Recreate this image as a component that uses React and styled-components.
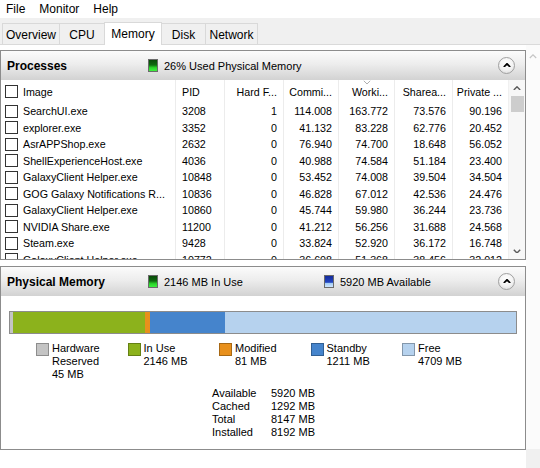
import React from 'react'
import styled, { createGlobalStyle } from 'styled-components'

const menus = ['File', 'Monitor', 'Help']
const tabs = [
  { name: 'Overview', w: 58 },
  { name: 'CPU', w: 46 },
  { name: 'Memory', w: 58, active: true },
  { name: 'Disk', w: 45 },
  { name: 'Network', w: 53 },
]

const columns = [
  { name: 'Image', align: 'left' },
  { name: 'PID', align: 'left' },
  { name: 'Hard F...', align: 'right' },
  { name: 'Commi...', align: 'right' },
  { name: 'Worki...', align: 'right', sorted: true },
  { name: 'Sharea...', align: 'right' },
  { name: 'Private ...', align: 'right' },
]

const processes = [
  ['SearchUI.exe', '3208', '1', '114.008', '163.772', '73.576', '90.196'],
  ['explorer.exe', '3352', '0', '41.132', '83.228', '62.776', '20.452'],
  ['AsrAPPShop.exe', '2632', '0', '76.940', '74.700', '18.648', '56.052'],
  ['ShellExperienceHost.exe', '4036', '0', '40.988', '74.584', '51.184', '23.400'],
  ['GalaxyClient Helper.exe', '10848', '0', '53.452', '74.008', '39.504', '34.504'],
  ['GOG Galaxy Notifications R...', '10836', '0', '46.828', '67.012', '42.536', '24.476'],
  ['GalaxyClient Helper.exe', '10860', '0', '45.744', '59.980', '36.244', '23.736'],
  ['NVIDIA Share.exe', '11200', '0', '41.212', '56.256', '31.688', '24.568'],
  ['Steam.exe', '9428', '0', '33.824', '52.920', '36.172', '16.748'],
  ['GalaxyClient Helper.exe', '10772', '0', '36.608', '51.368', '38.456', '32.012'],
]

const memory = [
  { label: ['Hardware', 'Reserved'], mb: 45, color: '#c4c4c4' },
  { label: ['In Use'], mb: 2146, color: '#8cb21c' },
  { label: ['Modified'], mb: 81, color: '#e8901c' },
  { label: ['Standby'], mb: 1211, color: '#4584cc' },
  { label: ['Free'], mb: 4709, color: '#b6d2ee' },
]

const stats = [
  ['Available', '5920 MB'],
  ['Cached', '1292 MB'],
  ['Total', '8147 MB'],
  ['Installed', '8192 MB'],
]

const Chevron = ({ up = true, color = '#000', size = 8, width = 1.6 }) => (
  <svg width={size} height={size * 0.6} viewBox="0 0 10 6">
    <polyline
      points={up ? '1,5 5,1 9,5' : '1,1 5,5 9,1'}
      fill="none"
      stroke={color}
      strokeWidth={width}
    />
  </svg>
)

const App = () => {
  return (
    <Window>
      <GlobalStyle />
      <MenuBar>
        {menus.map((m) => (
          <MenuItem key={m}>{m}</MenuItem>
        ))}
      </MenuBar>
      <TabStrip>
        {tabs.map((t) => (
          <Tab key={t.name} $w={t.w} $active={t.active}>
            {t.name}
          </Tab>
        ))}
      </TabStrip>
      <Body>
        <Main>
          <Panel $h={210}>
            <PanelHeader>
              <Title>Processes</Title>
              <Status>
                <Indicator $kind="green" />
                26% Used Physical Memory
              </Status>
              <CollapseButton>
                <Chevron width={2.2} />
              </CollapseButton>
            </PanelHeader>
            <TableArea>
              <Table>
                <HeaderRow>
                  {columns.map((c, i) => (
                    <Cell key={c.name} $align={c.align} $first={i === 0} $last={i === columns.length - 1}>
                      {i === 0 && <Checkbox />}
                      {c.name}
                      {c.sorted && (
                        <SortMark>
                          <Chevron up={false} color="#9a9a9a" size={8} width={1} />
                        </SortMark>
                      )}
                    </Cell>
                  ))}
                </HeaderRow>
                {processes.map((row, r) => (
                  <Row key={r}>
                    {row.map((v, i) => (
                      <Cell
                        key={i}
                        $align={columns[i].align}
                        $first={i === 0}
                        $last={i === row.length - 1}
                      >
                        {i === 0 && <Checkbox />}
                        {v}
                      </Cell>
                    ))}
                  </Row>
                ))}
              </Table>
              <ScrollBar>
                <ArrowBox>
                  <Chevron color="#5a5a5a" width={1.8} />
                </ArrowBox>
                <Thumb />
                <Spacer />
                <ArrowBox>
                  <Chevron up={false} color="#5a5a5a" width={1.8} />
                </ArrowBox>
              </ScrollBar>
            </TableArea>
          </Panel>

          <Panel $h={184}>
            <PanelHeader>
              <Title>Physical Memory</Title>
              <Status $w={176}>
                <Indicator $kind="green" />
                2146 MB In Use
              </Status>
              <Status>
                <Indicator $kind="blue" />
                5920 MB Available
              </Status>
              <CollapseButton>
                <Chevron width={2.2} />
              </CollapseButton>
            </PanelHeader>
            <MemoryBody>
              <Bar>
                {memory.map((m) => (
                  <Segment key={m.color} $grow={m.mb} $color={m.color} />
                ))}
              </Bar>
              <Legend>
                {memory.map((m) => (
                  <LegendItem key={m.color}>
                    <Swatch $color={m.color} />
                    <LegendText>
                      {m.label.map((l) => (
                        <div key={l}>{l}</div>
                      ))}
                      <div>{m.mb} MB</div>
                    </LegendText>
                  </LegendItem>
                ))}
              </Legend>
              <Stats>
                {stats.map(([k, v]) => (
                  <React.Fragment key={k}>
                    <span>{k}</span>
                    <span>{v}</span>
                  </React.Fragment>
                ))}
              </Stats>
            </MemoryBody>
          </Panel>
        </Main>
        <OuterScroll>
          <OuterTrack>
            <Chevron color="#c4c4c4" width={1.4} />
          </OuterTrack>
          <Corner />
        </OuterScroll>
      </Body>
    </Window>
  )
}

const GlobalStyle = createGlobalStyle`
  html, body { margin: 0; padding: 0; background: #fff; }
  body {
    font-family: "Liberation Sans", Arial, sans-serif;
    color: #000;
    overflow: hidden;
  }
`

const Window = styled.div`
  width: 540px;
  height: 468px;
  display: flex;
  flex-direction: column;
  overflow: hidden;
  background: #fff;
`

const MenuBar = styled.div`
  height: 18px;
  display: flex;
  align-items: center;
  margin-left: -1px;
  background: #fff;
`

const MenuItem = styled.span`
  padding: 0 7px;
  font-size: 12px;
  line-height: 18px;
`

const TabStrip = styled.div`
  height: 26px;
  display: flex;
  align-items: flex-end;
  padding-left: 2px;
  background: #f0f0f0;
`

const Tab = styled.div`
  box-sizing: border-box;
  width: ${(p) => p.$w}px;
  height: ${(p) => (p.$active ? 23 : 21)}px;
  margin-bottom: ${(p) => (p.$active ? -1 : 0)}px;
  margin-right: -1px;
  position: relative;
  z-index: ${(p) => (p.$active ? 1 : 0)};
  display: flex;
  align-items: center;
  justify-content: center;
  padding-top: ${(p) => (p.$active ? 0 : 1)}px;
  font-size: 12px;
  background: ${(p) => (p.$active ? '#fff' : '#f0f0f0')};
  border: 1px solid #d9d9d9;
  border-bottom: none;
`

const Body = styled.div`
  flex: 1;
  display: flex;
  min-height: 0;
  border-top: 1px solid #dadada;
`

const Main = styled.div`
  width: 526px;
  padding-top: 5px;
  display: flex;
  flex-direction: column;
  gap: 6px;
`

const Panel = styled.div`
  box-sizing: border-box;
  height: ${(p) => p.$h}px;
  border: 1px solid #8c8c8c;
  display: flex;
  flex-direction: column;
  overflow: hidden;
  background: #fff;
`

const PanelHeader = styled.div`
  height: 29px;
  flex-shrink: 0;
  display: flex;
  align-items: center;
  padding: 0 10px 0 6px;
  background: linear-gradient(to bottom, #fbfbfb 0%, #ededed 45%, #d2d2d2 100%);
`

const Title = styled.div`
  width: 141px;
  font-size: 12px;
  font-weight: bold;
`

const Status = styled.div`
  display: flex;
  align-items: center;
  gap: 6px;
  font-size: 11px;
  ${(p) => p.$w && `width: ${p.$w}px;`}
`

const Indicator = styled.span`
  box-sizing: border-box;
  width: 10px;
  height: 13px;
  border: 1px solid #6a6a6a;
  background: ${(p) =>
    p.$kind === 'green'
      ? 'linear-gradient(to bottom, #0a4a0a 0%, #0f6a10 45%, #2ad52a 70%, #3ef03e 100%)'
      : 'linear-gradient(to bottom, #132a9a 0%, #2346c2 58%, #9fcaf4 64%, #cfe6ff 100%)'};
`

const CollapseButton = styled.div`
  margin-left: auto;
  box-sizing: border-box;
  width: 17px;
  height: 17px;
  border-radius: 50%;
  border: 1px solid #a0a0a0;
  background: radial-gradient(circle at 50% 35%, #ffffff 0%, #f2f2f2 55%, #d4d4d4 100%);
  display: flex;
  align-items: center;
  justify-content: center;
  padding-bottom: 1px;
`

const TableArea = styled.div`
  flex: 1;
  min-height: 0;
  display: flex;
  overflow: hidden;
`

const Table = styled.div`
  width: 507px;
  display: flex;
  flex-direction: column;
`

const gridCols = '175px 49px 59px 55px 56px 58px 55px'

const HeaderRow = styled.div`
  display: grid;
  grid-template-columns: ${gridCols};
  height: 23px;
  flex-shrink: 0;
`

const Row = styled.div`
  display: grid;
  grid-template-columns: ${gridCols};
  height: 16.5px;
  flex-shrink: 0;
`

const Cell = styled.div`
  position: relative;
  box-sizing: border-box;
  display: flex;
  align-items: center;
  justify-content: ${(p) => (p.$align === 'right' ? 'flex-end' : 'flex-start')};
  padding: ${(p) => (p.$first ? '0 0 0 4px' : p.$align === 'right' ? '0 6px 0 0' : '0 0 0 6px')};
  border-right: ${(p) => (p.$last ? 'none' : '1px solid #ececec')};
  font-size: 10.7px;
  white-space: nowrap;
  overflow: hidden;
`

const Checkbox = styled.span`
  box-sizing: border-box;
  width: 13px;
  height: 13px;
  border: 1px solid #333;
  background: #fff;
  margin-right: 5px;
  flex-shrink: 0;
`

const SortMark = styled.span`
  position: absolute;
  top: 0;
  left: 50%;
  transform: translateX(-50%);
  line-height: 0;
`

const ScrollBar = styled.div`
  width: 17px;
  display: flex;
  flex-direction: column;
  align-items: center;
  background: #f7f7f7;
  border-left: 1px solid #f0f0f0;
  box-sizing: border-box;
`

const ArrowBox = styled.div`
  height: 16px;
  width: 100%;
  display: flex;
  align-items: center;
  justify-content: center;
`

const Thumb = styled.div`
  width: 13px;
  height: 16px;
  background: #cdcdcd;
`

const Spacer = styled.div`
  flex: 1;
`

const MemoryBody = styled.div`
  padding: 15px 8px 0 8px;
  display: flex;
  flex-direction: column;
`

const Bar = styled.div`
  box-sizing: border-box;
  height: 23px;
  border: 1px solid #8c8c8c;
  display: flex;
`

const Segment = styled.div`
  flex: ${(p) => p.$grow} 1 0;
  background: ${(p) => p.$color};
`

const Legend = styled.div`
  display: flex;
  margin-top: 8px;
  padding-left: 27px;
`

const LegendItem = styled.div`
  width: 91.5px;
  display: flex;
  gap: 3px;
`

const Swatch = styled.span`
  box-sizing: border-box;
  width: 13px;
  height: 13px;
  margin-top: 1px;
  flex-shrink: 0;
  background: ${(p) => p.$color};
  border: 1px solid rgba(0, 0, 0, 0.28);
`

const LegendText = styled.div`
  font-size: 11px;
  line-height: 13px;
`

const Stats = styled.div`
  display: grid;
  grid-template-columns: 59px auto;
  margin: 6px 0 0 203px;
  font-size: 11px;
  line-height: 13px;
`

const OuterScroll = styled.div`
  width: 14px;
  display: flex;
  flex-direction: column;
`

const OuterTrack = styled.div`
  flex: 1;
  display: flex;
  justify-content: center;
  padding-top: 9px;
  background: #fbfbfb;
`

const Corner = styled.div`
  height: 19px;
  background: #f0f0f0;
`

export default App
